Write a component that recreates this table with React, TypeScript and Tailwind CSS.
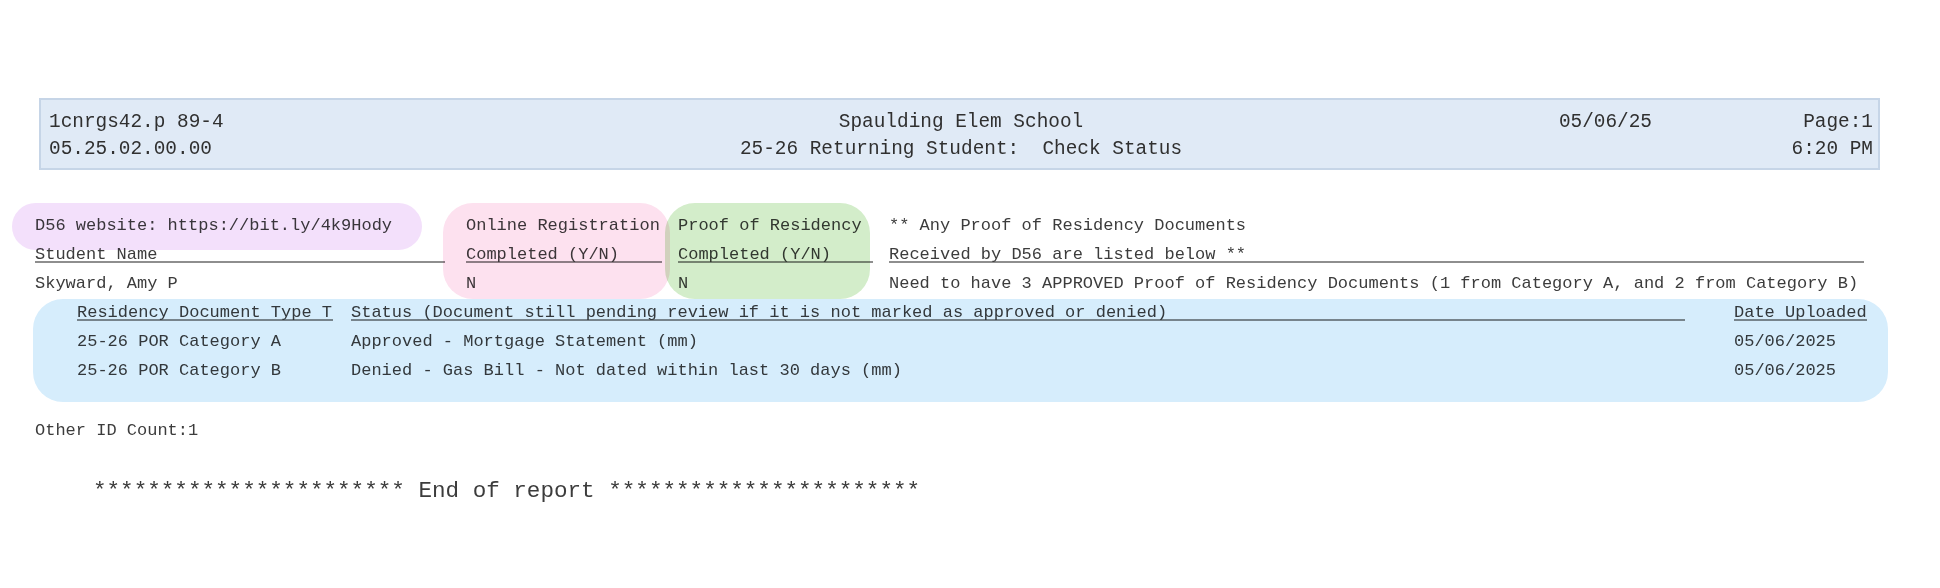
const mono = "font-['Liberation_Mono','DejaVu_Sans_Mono',monospace]";

const BLUE_ROWS = [
  { type: "25-26 POR Category A", status: "Approved - Mortgage Statement (mm)", date: "05/06/2025" },
  { type: "25-26 POR Category B", status: "Denied - Gas Bill - Not dated within last 30 days (mm)", date: "05/06/2025" },
] as const;

function ReportHeader() {
  return (
    <div className="ml-[39px] mt-[98px] w-[1841px] border-2 border-[#c6d5e7] bg-[#e0eaf6] pl-[8px] pr-[5px] pt-[9px] pb-[5px] text-[19.4px] leading-[27px] text-[#303030]">
      <div className="grid grid-cols-[1fr_auto_1fr] whitespace-pre">
        <div>1cnrgs42.p 89-4</div>
        <div className="text-center">Spaulding Elem School</div>
        <div className="flex justify-end">
          <div>05/06/25</div>
          <div className="w-[221px] text-right">Page:1</div>
        </div>
      </div>
      <div className="grid grid-cols-[1fr_auto_1fr] whitespace-pre">
        <div>05.25.02.00.00</div>
        <div className="text-center">25-26 Returning Student:  Check Status</div>
        <div className="flex justify-end">
          <div className="w-[221px] text-right">6:20 PM</div>
        </div>
      </div>
    </div>
  );
}

function StudentTable() {
  const rule = "h-[23px] border-b-2 border-[#8e8e8e]";
  return (
    <div className="mt-[41px] pl-[35px] text-[17px] leading-[29px] text-[#3c3c3c] whitespace-pre">
      <div className="flex">
        <div className="mr-[21px] w-[410px]">D56 website: https://bit.ly/4k9Hody</div>
        <div className="mr-[16px] w-[196px]">Online Registration</div>
        <div className="mr-[16px] w-[195px]">Proof of Residency</div>
        <div className="w-[975px]">** Any Proof of Residency Documents</div>
      </div>
      <div className="flex h-[29px]">
        <div className={`mr-[21px] w-[410px] ${rule}`}>Student Name</div>
        <div className={`mr-[16px] w-[196px] ${rule}`}>Completed (Y/N)</div>
        <div className={`mr-[16px] w-[195px] ${rule}`}>Completed (Y/N)</div>
        <div className={`w-[975px] ${rule}`}>Received by D56 are listed below **</div>
      </div>
      <div className="flex">
        <div className="mr-[21px] w-[410px]">Skyward, Amy P</div>
        <div className="mr-[16px] w-[196px]">N</div>
        <div className="mr-[16px] w-[195px]">N</div>
        <div className="w-[975px]">
          Need to have 3 APPROVED Proof of Residency Documents (1 from Category A, and 2 from Category B)
        </div>
      </div>

      <div className="pl-[42px]">
        <div className="flex h-[29px]">
          <div className={`mr-[18px] w-[256px] ${rule}`}>Residency Document Type T</div>
          <div className={`mr-[49px] w-[1334px] ${rule}`}>
            Status (Document still pending review if it is not marked as approved or denied)
          </div>
          <div className={`w-[133px] ${rule}`}>Date Uploaded</div>
        </div>
        {BLUE_ROWS.map((r) => (
          <div key={r.type} className="flex">
            <div className="mr-[18px] w-[256px]">{r.type}</div>
            <div className="mr-[49px] w-[1334px]">{r.status}</div>
            <div className="w-[133px]">{r.date}</div>
          </div>
        ))}
      </div>

      <div className="mt-[31px]">Other ID Count:1</div>
      <div className="mt-[32px] pl-[58px] text-[22.6px]">
        *********************** End of report ***********************
      </div>
    </div>
  );
}

export default function App() {
  return (
    <div className={`relative h-[588px] w-[1940px] overflow-hidden bg-white ${mono}`}>
      <ReportHeader />
      <StudentTable />

      {/* marker highlights laid over the printed report */}
      <div className="pointer-events-none absolute left-[12px] top-[203px] h-[47px] w-[410px] rounded-[24px] bg-[#f3e0fb] mix-blend-multiply" />
      <div className="pointer-events-none absolute left-[443px] top-[203px] h-[96px] w-[227px] rounded-[30px] bg-[#fde1ef] mix-blend-multiply" />
      <div className="pointer-events-none absolute left-[665px] top-[203px] h-[96px] w-[205px] rounded-[30px] bg-[#d3edca] mix-blend-multiply" />
      <div className="pointer-events-none absolute left-[33px] top-[299px] h-[103px] w-[1855px] rounded-[30px] bg-[#d6edfc] mix-blend-multiply" />
    </div>
  );
}
